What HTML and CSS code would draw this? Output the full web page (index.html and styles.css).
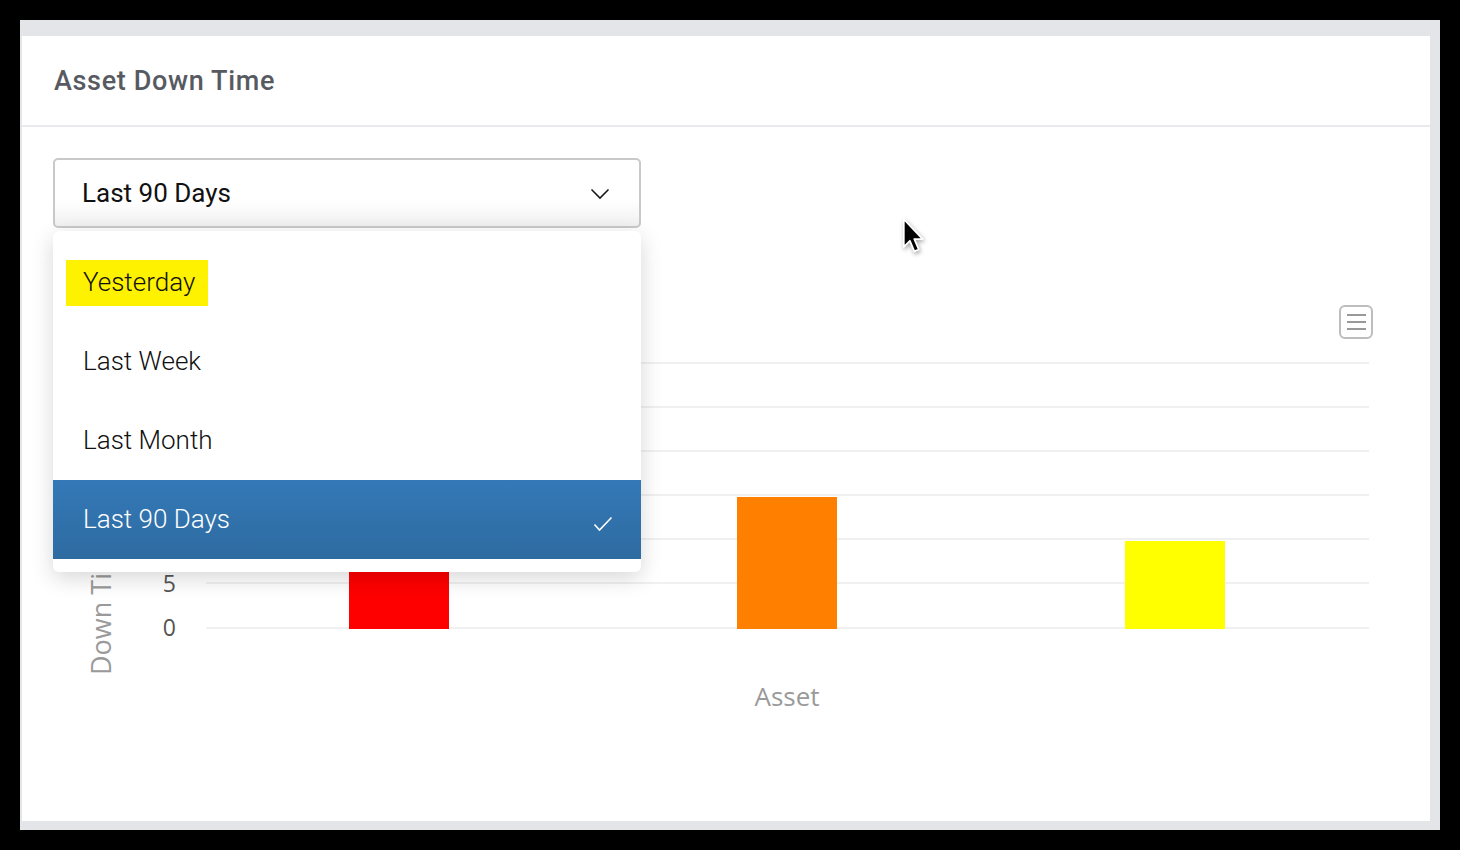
FILE: index.html
```html
<!DOCTYPE html>
<html lang="en">
<head>
<meta charset="utf-8">
<title>Asset Down Time</title>
<link rel="stylesheet" href="styles.css">
</head>
<body>
<div class="frame">
  <div class="card">
    <div class="card-header">
      <h1 class="card-title">Asset Down Time</h1>
    </div>
    <div class="controls">
      <div class="select-wrap">
        <div class="select">
          <span class="select-value">Last 90 Days</span>
          <svg class="chevron" width="20" height="12" viewBox="0 0 20 12"><polyline points="1.5,1.5 10,10 18.5,1.5" fill="none" stroke="#1a1a1a" stroke-width="1.6"/></svg>
        </div>
        <div class="dropdown">
          <div class="option option-first"><span class="highlight">Yesterday</span></div>
          <div class="option">Last Week</div>
          <div class="option">Last Month</div>
          <div class="option option-selected">
            <span>Last 90 Days</span>
            <svg class="check" width="20" height="16" viewBox="0 0 20 16"><polyline points="1.5,8.5 6.5,14 18.5,1.5" fill="none" stroke="#ffffff" stroke-width="1.6"/></svg>
          </div>
        </div>
      </div>
    </div>
    <svg class="chart" width="1408" height="593" viewBox="0 0 1408 593">
      <g fill="#f0f0f0">
        <rect x="184" y="134" width="1163" height="2"/>
        <rect x="184" y="178" width="1163" height="2"/>
        <rect x="184" y="222" width="1163" height="2"/>
        <rect x="184" y="266" width="1163" height="2"/>
        <rect x="184" y="310" width="1163" height="2"/>
        <rect x="184" y="354" width="1163" height="2"/>
        <rect x="184" y="399" width="1163" height="2"/>
      </g>
      <rect x="327" y="180" width="100" height="221" fill="#ff0000"/>
      <rect x="715" y="269" width="100" height="132" fill="#ff8000"/>
      <rect x="1103" y="313" width="100" height="88" fill="#ffff00"/>
      <g class="tick" text-anchor="end">
        <text x="154" y="364">5</text>
        <text x="154" y="408">0</text>
      </g>
      <text class="axis-title" transform="translate(89,447) rotate(-90)">Down Time</text>
      <text class="axis-title x-title" x="765" y="478" text-anchor="middle">Asset</text>
      <g class="menu-icon">
        <rect x="1318" y="78" width="32" height="32" rx="5" fill="#fff" stroke="#bdbdbd" stroke-width="2"/>
        <line x1="1325" y1="87" x2="1344" y2="87" stroke="#999" stroke-width="2"/>
        <line x1="1325" y1="94" x2="1344" y2="94" stroke="#999" stroke-width="2"/>
        <line x1="1325" y1="101" x2="1344" y2="101" stroke="#999" stroke-width="2"/>
      </g>
    </svg>
  </div>
</div>
<svg class="cursor" width="30" height="40" viewBox="0 0 26 36">
  <path d="M2 1 L2 26 L7.5 20.5 L11.5 30 L15.5 28.3 L11.5 19 L19 19 Z" fill="#000" stroke="#fff" stroke-width="1.6" stroke-linejoin="round"/>
</svg>
</body>
</html>
```

FILE: styles.css
```css
html, body {
  margin: 0;
  padding: 0;
}

body {
  background: #000;
  width: 1460px;
  height: 850px;
  position: relative;
  overflow: hidden;
  font-family: Roboto, "Liberation Sans", sans-serif;
}

.frame {
  margin: 20px 20px 0 20px;
  width: 1420px;
  height: 810px;
  box-sizing: border-box;
  background: #e4e5e9;
  padding: 16px 10px 9px 2px;
}

.card {
  background: #fff;
  width: 1408px;
  height: 785px;
  overflow: hidden;
}

.card-header {
  height: 89px;
  border-bottom: 2px solid #e9e9ee;
  display: flex;
  align-items: center;
  padding-left: 32px;
}

.card-title {
  margin: 0;
  font-family: Roboto, "Liberation Sans", sans-serif;
  font-weight: 500;
  font-size: 27px;
  color: #585a62;
  letter-spacing: 0.65px;
}

.controls {
  padding: 31px 0 0 31px;
}

.select-wrap {
  position: relative;
  width: 588px;
  z-index: 2;
}

.select {
  height: 70px;
  box-sizing: border-box;
  border: 2px solid #c9c9c9;
  border-radius: 5px;
  background: linear-gradient(#ffffff 60%, #f1f1f1);
  display: flex;
  align-items: center;
  justify-content: space-between;
  padding: 0 29px 0 27px;
}

.select-value {
  font-size: 26px;
  font-weight: 400;
  color: #111;
}

.chevron {
  display: block;
  margin-top: 2px;
}

.dropdown {
  position: absolute;
  top: 73px;
  left: 0;
  width: 588px;
  box-sizing: border-box;
  padding: 12px 0 13px;
  background: #fff;
  border-radius: 6px;
  box-shadow: 0 6px 22px rgba(0, 0, 0, 0.16);
}

.option {
  height: 79px;
  box-sizing: border-box;
  padding-bottom: 2px;
  display: flex;
  align-items: center;
  padding-left: 30px;
  font-size: 26px;
  font-weight: 300;
  color: #111;
}

.option-first {
  padding-left: 13px;
  padding-bottom: 0;
}

.highlight {
  display: flex;
  align-items: center;
  height: 46px;
  box-sizing: border-box;
  padding: 0 13px 2px 17px;
  background: #fff200;
  color: #111;
}

.option-selected {
  background: linear-gradient(#3479b7, #2e6ba1);
  color: #fff;
  justify-content: space-between;
  padding-right: 28px;
}

.check {
  display: block;
  margin-top: 10px;
}

.chart {
  display: block;
}

.tick text {
  font-family: "Open Sans", "Liberation Sans", sans-serif;
  font-size: 23px;
  fill: #555;
}

.axis-title {
  font-family: "Open Sans", "Liberation Sans", sans-serif;
  font-size: 27px;
  fill: #9a9a9a;
}

.x-title {
  font-size: 26px;
}

.cursor {
  position: absolute;
  left: 901px;
  top: 218px;
  filter: drop-shadow(1px 2px 2px rgba(0, 0, 0, 0.35));
}
```
